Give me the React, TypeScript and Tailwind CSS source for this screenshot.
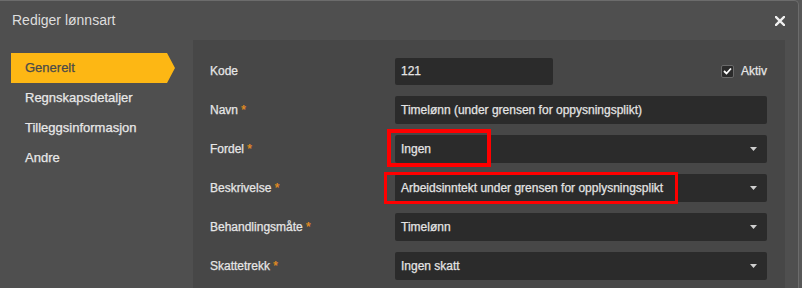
import React from "react";

type Field = {
  label: string;
  value: string;
  required?: boolean;
  select?: boolean;
};

const fields: Field[] = [
  { label: "Navn", value: "Timelønn (under grensen for oppysningsplikt)", required: true },
  { label: "Fordel", value: "Ingen", required: true, select: true },
  { label: "Beskrivelse", value: "Arbeidsinntekt under grensen for opplysningsplikt", required: true, select: true },
  { label: "Behandlingsmåte", value: "Timelønn", required: true, select: true },
  { label: "Skattetrekk", value: "Ingen skatt", required: true, select: true },
];

const menu = ["Generelt", "Regnskapsdetaljer", "Tilleggsinformasjon", "Andre"];

function Caret() {
  return (
    <svg width="7" height="4" viewBox="0 0 7 4" className="shrink-0">
      <path d="M0 0 L7 0 L3.5 4 Z" fill="#d0d0d0" />
    </svg>
  );
}

export default function App() {
  return (
    <div
      className="relative h-[288px] w-[802px] overflow-hidden bg-[#575757] text-[12px] text-[#e6e6e6]"
      style={{ fontFamily: '"Liberation Sans", Arial, sans-serif' }}
    >
      <div className="h-full w-[799px] rounded-tr-[5px] border-t border-r border-[#6c6c6c] bg-[#4f4f4f]">
        {/* Header */}
        <div className="flex h-[39px] items-center justify-between pl-[12px] pr-[13px]">
          <span className="text-[14px] text-[#dedede]">Rediger lønnsart</span>
          <svg width="10" height="10" viewBox="0 0 10 10">
            <path d="M1 1 L9 9 M9 1 L1 9" stroke="#f0f0f0" strokeWidth="2.4" strokeLinecap="square" />
          </svg>
        </div>

        <div className="flex h-full pl-[11px] [-webkit-text-stroke:0.25px]">
          {/* Sidebar */}
          <div className="w-[182px] shrink-0 pt-[13px] text-[13px]">
            {menu.map((m, i) =>
              i === 0 ? (
                <div
                  key={m}
                  className="flex h-[30px] w-[164px] items-center bg-[#fdb714] pl-[14px] text-[#4a4a4a]"
                  style={{ clipPath: "polygon(0 0, 156px 0, 164px 50%, 156px 100%, 0 100%)" }}
                >
                  {m}
                </div>
              ) : (
                <div key={m} className="flex h-[30px] items-center pl-[14px] text-[#e8e8e8]">
                  {m}
                </div>
              )
            )}
          </div>

          {/* Panel */}
          <div className="w-[592px] shrink-0 bg-[#474747] pl-[17px] pr-[18px] pt-[17px]">
            <div className="flex flex-col gap-[11px]">
              <div className="flex h-[28px] items-center">
                <div className="w-[185px] shrink-0">Kode</div>
                <div className="flex h-[27px] w-[158px] items-center rounded-[2px] bg-[#2b2b2b] px-[6px] text-[#e4e4e4]">
                  121
                </div>
                <div className="ml-auto flex items-center gap-[7px]">
                  <span className="flex h-[13px] w-[13px] items-center justify-center rounded-[2px] border border-[#6a6a6a] bg-[#2b2b2b]">
                    <svg width="9" height="8" viewBox="0 0 9 8">
                      <path d="M1 4 L3.5 6.5 L8 1.5" fill="none" stroke="#ffffff" strokeWidth="1.8" />
                    </svg>
                  </span>
                  <span>Aktiv</span>
                </div>
              </div>

              {fields.map((f) => (
                <div key={f.label} className="flex h-[28px] items-center">
                  <div className="w-[185px] shrink-0">
                    {f.label}
                    {f.required && <span className="text-[#e8901e]"> *</span>}
                  </div>
                  <div className="flex h-[28px] flex-1 items-center justify-between rounded-[2px] bg-[#2b2b2b] pl-[6px] pr-[10px] text-[#e4e4e4]">
                    <span>{f.value}</span>
                    {f.select && <Caret />}
                  </div>
                </div>
              ))}
            </div>
          </div>
        </div>
      </div>

      {/* Annotation boxes */}
      <div className="absolute left-[387px] top-[129px] h-[38px] w-[104px] border-[4px] border-[#ff0000]" />
      <div className="absolute left-[384px] top-[172px] h-[32px] w-[294px] border-[3px] border-[#ff0000]" />
    </div>
  );
}
